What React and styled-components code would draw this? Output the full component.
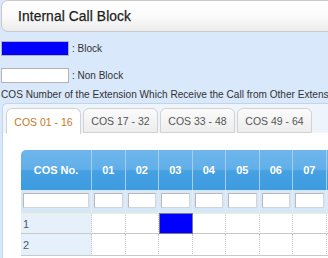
import React from "react";
import styled, { createGlobalStyle } from "styled-components";

const Global = createGlobalStyle`
  html, body { margin: 0; padding: 0; }
  body {
    width: 328px;
    height: 258px;
    overflow: hidden;
    background: #d9e8fb;
    font-family: "Liberation Sans", Arial, sans-serif;
  }
`;

const Page = styled.div`
  width: 328px;
  height: 258px;
  overflow: hidden;
  background: #d9e8fb;
  display: flex;
  flex-direction: column;
`;

const TitleBar = styled.div`
  box-sizing: border-box;
  margin-left: 1px;
  width: 360px;
  height: 32px;
  flex: none;
  border: 1px solid #c9c9c9;
  border-radius: 7px;
  background: linear-gradient(#ffffff 0%, #fbfbfb 50%, #ececec 100%);
  display: flex;
  align-items: center;
  padding-left: 16px;
  font-size: 13.8px;
  color: #222;
  letter-spacing: 0.1px;
  -webkit-text-stroke: 0.25px #222;
`;

const LegendRow = styled.div`
  display: flex;
  align-items: center;
  gap: 3px;
  margin-left: 1px;
  margin-top: ${(p) => p.$top}px;
  height: 15px;
  font-size: 10px;
  color: #333;
  flex: none;
`;

const Swatch = styled.div`
  box-sizing: border-box;
  width: 68px;
  height: 15px;
  background: ${(p) => p.$color};
  border: 1px solid #b4b4b4;
`;

const Description = styled.div`
  margin-top: 6px;
  margin-left: 1px;
  font-size: 10.1px;
  color: #333;
  white-space: nowrap;
  line-height: 12px;
  flex: none;
`;

const TabPanel = styled.div`
  box-sizing: border-box;
  margin-top: 2px;
  margin-left: 2px;
  width: 360px;
  flex: 1;
  border: 1px solid #c4d4e4;
  border-right: none;
  border-bottom: none;
  border-radius: 5px 0 0 0;
  background: #eef4fb;
  display: flex;
  flex-direction: column;
`;

const TabStrip = styled.div`
  display: flex;
  gap: 2px;
  padding: 4px 0 0 3px;
  border-bottom: 1px solid #d0d0d0;
  height: 25px;
  flex: none;
`;

const Tab = styled.div`
  box-sizing: border-box;
  width: 75px;
  height: ${(p) => (p.$active ? 26 : 25)}px;
  border: 1px solid #d2d2d2;
  border-bottom: ${(p) => (p.$active ? "none" : "1px solid #d2d2d2")};
  border-radius: 6px 6px 0 0;
  background: ${(p) =>
    p.$active ? "#ffffff" : "linear-gradient(#fbfbfb, #ededed)"};
  color: ${(p) => (p.$active ? "#c47a2c" : "#555")};
  font-size: 10.5px;
  display: flex;
  align-items: center;
  justify-content: center;
  position: relative;
  z-index: 1;
`;

const Content = styled.div`
  flex: 1;
  background: #ffffff;
  padding: 17px 0 0 18px;
  margin-top: -1px;
`;

const Grid = styled.div`
  display: grid;
  grid-template-columns: 71px repeat(16, 33.5px);
  grid-template-rows: 40px 23px 21px 22px;
`;

const HeadCell = styled.div`
  box-sizing: border-box;
  display: flex;
  align-items: center;
  justify-content: center;
  color: #ffffff;
  font-weight: bold;
  font-size: 11px;
  background: linear-gradient(
    #6db6ec 0%,
    #62afe8 48%,
    #46a1e2 52%,
    #3d9be0 100%
  );
  border-right: 1px solid #a8cdee;
  border-radius: ${(p) => (p.$first ? "5px 0 0 0" : "0")};
`;

const FilterCell = styled.div`
  box-sizing: border-box;
  background: #d6e7f7;
  border-right: 1px solid #e4eef9;
  padding: 3px 2px 4px 2px;
  display: flex;
`;

const FilterInput = styled.div`
  box-sizing: border-box;
  flex: 1;
  height: 15px;
  background: #ffffff;
  border: 1px solid #b9b9b9;
  border-right-color: #d4d4d4;
  border-bottom-color: #d4d4d4;
`;

const RowLabel = styled.div`
  box-sizing: border-box;
  background: #e6f0fa;
  border-top: ${(p) => (p.$firstRow ? "1px solid #efeed8" : "none")};
  border-bottom: 1px solid #c9c9c9;
  border-right: 1px dotted #c8c8c8;
  font-size: 11px;
  color: #4a5a6a;
  display: flex;
  align-items: center;
  padding-left: 2px;
`;

const Cell = styled.div`
  box-sizing: border-box;
  background: ${(p) => (p.$blocked ? "#0000ff" : "#ffffff")};
  border-top: ${(p) => (p.$firstRow ? "1px solid #efeed8" : "none")};
  border-bottom: 1px solid #c9c9c9;
  border-right: 1px dotted #c8c8c8;
  ${(p) => (p.$blocked ? "border: 1px solid #7a7a8a;" : "")}
`;

const tabs = ["COS 01 - 16", "COS 17 - 32", "COS 33 - 48", "COS 49 - 64"];
const cols = Array.from({ length: 16 }, (_, i) => String(i + 1).padStart(2, "0"));
const rows = [
  { label: "1", blocked: [2] },
  { label: "2", blocked: [] },
];

export default function App() {
  return (
    <>
      <Global />
      <Page>
        <TitleBar>Internal Call Block</TitleBar>
        <LegendRow $top={9}>
          <Swatch $color="#0000ff" />
          <span>: Block</span>
        </LegendRow>
        <LegendRow $top={12}>
          <Swatch $color="#ffffff" />
          <span>: Non Block</span>
        </LegendRow>
        <Description>
          COS Number of the Extension Which Receive the Call from Other Extension
        </Description>
        <TabPanel>
          <TabStrip>
            {tabs.map((t, i) => (
              <Tab key={t} $active={i === 0}>
                {t}
              </Tab>
            ))}
          </TabStrip>
          <Content>
            <Grid>
              <HeadCell $first>COS No.</HeadCell>
              {cols.map((c) => (
                <HeadCell key={c}>{c}</HeadCell>
              ))}
              <FilterCell>
                <FilterInput />
              </FilterCell>
              {cols.map((c) => (
                <FilterCell key={"f" + c}>
                  <FilterInput />
                </FilterCell>
              ))}
              {rows.map((r, ri) => (
                <React.Fragment key={r.label}>
                  <RowLabel $firstRow={ri === 0}>{r.label}</RowLabel>
                  {cols.map((c, ci) => (
                    <Cell
                      key={r.label + c}
                      $firstRow={ri === 0}
                      $blocked={r.blocked.includes(ci)}
                    />
                  ))}
                </React.Fragment>
              ))}
            </Grid>
          </Content>
        </TabPanel>
      </Page>
    </>
  );
}
